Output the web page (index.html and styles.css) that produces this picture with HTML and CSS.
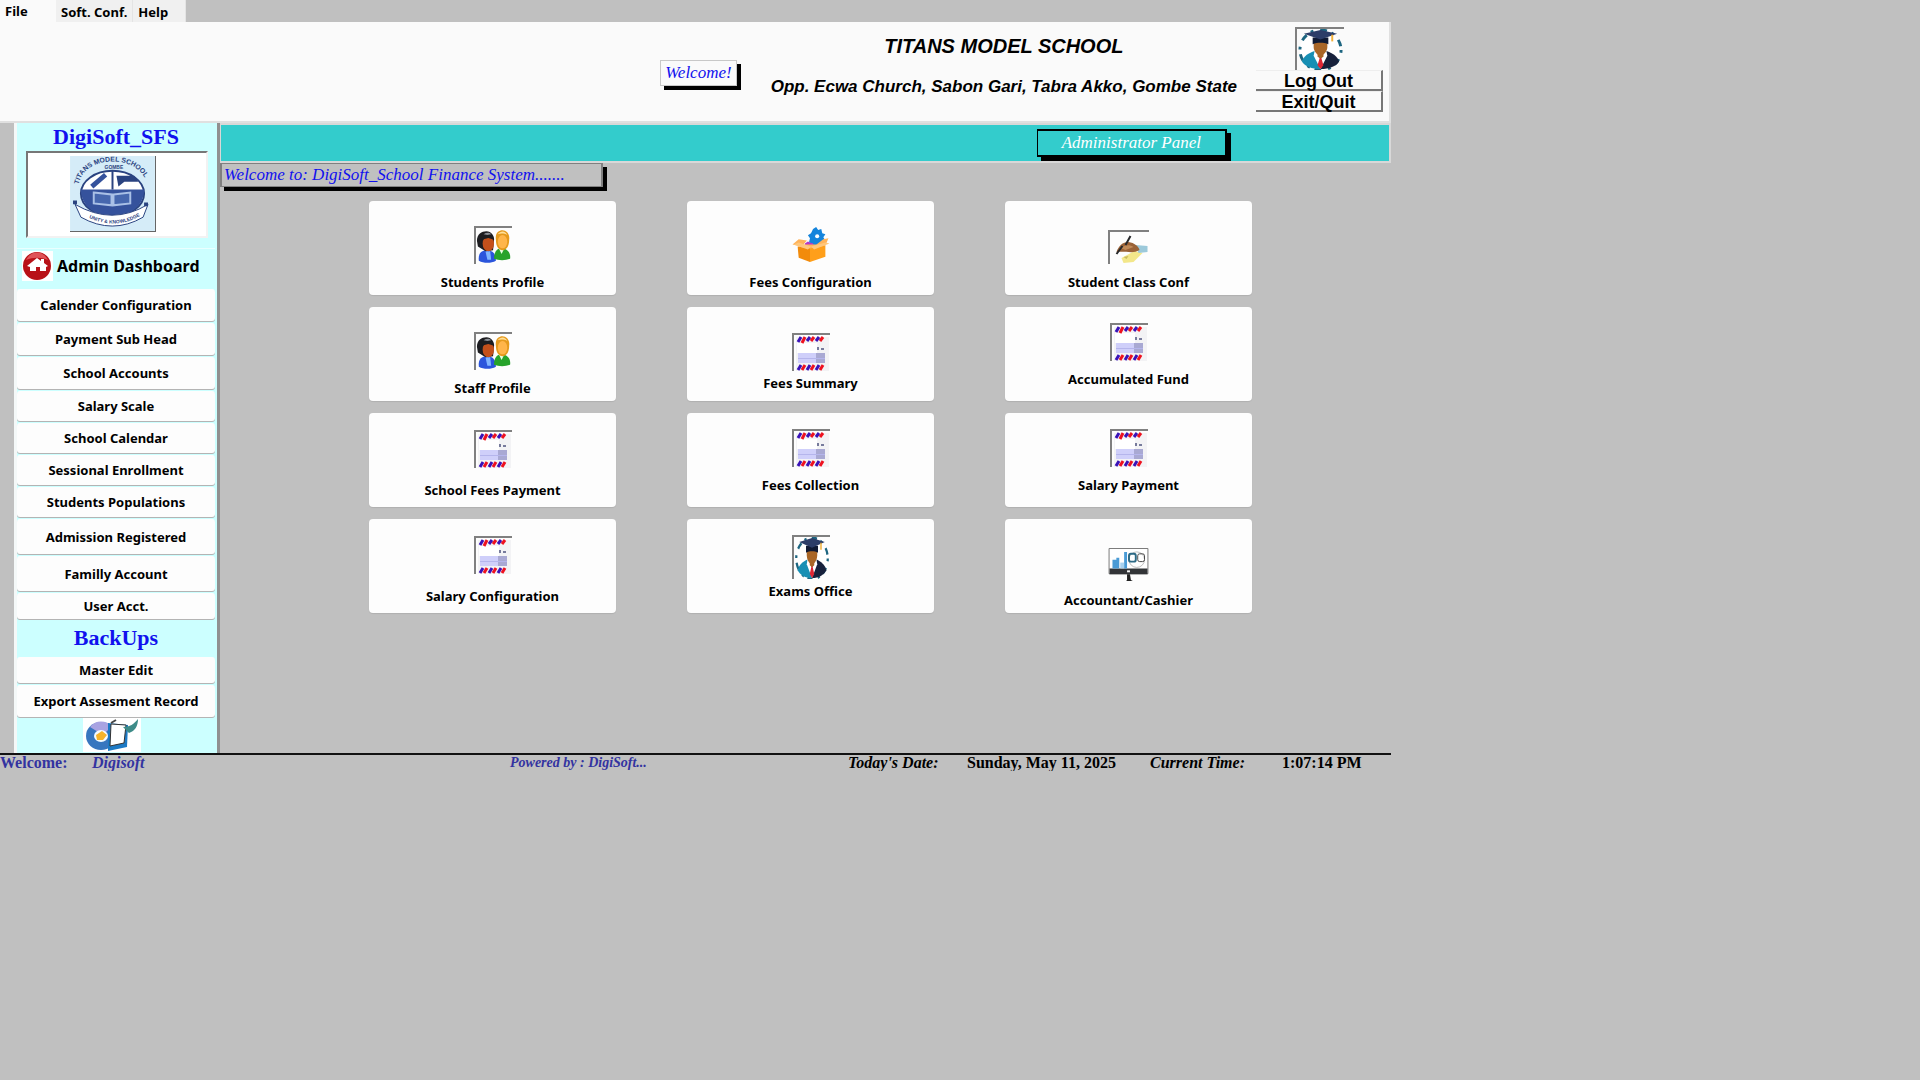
FILE: index.html
```html
<!DOCTYPE html>
<html lang="en">
<head>
<meta charset="utf-8">
<title>DigiSoft School Finance System</title>
<link rel="stylesheet" href="styles.css">
</head>
<body>
<svg class="sprite" aria-hidden="true">
  <symbol id="people" viewBox="0 0 38 37">
    <path fill="#2b55dc" d="M3 34c-1-8 3-11 9-11s9 4 9 11c-5 3-13 3-18 0z"/>
    <path fill="#7fb4ff" d="M10 24h5l1 9h-4z"/>
    <path fill="#27a32b" d="M19 32c0-7 3-11 8-11s10 4 9 11c-5 2-12 2-17 0z"/>
    <path fill="#e9ffe4" d="M24 21h6l-3 6z"/>
    <path fill="#1d1d20" d="M1 13C1 6 6 3 11 3s9 5 8 10l-1 10-8 1-8-5z"/>
    <ellipse cx="13" cy="16" rx="6" ry="8" fill="#c4501b"/>
    <path fill="#1d1d20" d="M6 12c3-6 11-6 13 0l-6-2z"/>
    <path fill="#8b8f96" d="M8 6c3-2 6-2 8 0l-4 1z"/>
    <path fill="#e59a1d" d="M21 12c-1-7 3-10 7-10s8 4 7 10c0 7-3 11-7 11s-7-4-7-11z"/>
    <ellipse cx="28" cy="14" rx="5" ry="7" fill="#ffb54a"/>
    <path fill="#ffe09a" d="M23 6c3-4 8-4 10 1-3-2-7-2-10-1z"/>
  </symbol>
  <symbol id="letter" viewBox="0 0 36 36">
    <path fill="#f3f3f5" d="M2 2h33v34H2z"/>
    <path fill="#fff" d="M3 8h20v10H3z"/>
    <path fill="#cfcffa" d="M4 18h18v10H4z"/>
    <path fill="#a9a9d3" d="M22 18h9v10h-9z"/>
    <path stroke="#b5b5ec" d="M4 23.500h27"/>
    <path stroke="#3a12b8" stroke-width="3" d="M4 7l3-5M13 6l3-4M22 6l3-4M4 35l3-5M13 35l3-5M22 35l3-5"/>
    <path stroke="#ee1220" stroke-width="3" d="M8 8l3-6M17 6l3-4M26 6l3-4M8 35l3-5M17 35l3-5M26 35l3-5"/>
    <path fill="#777b9c" d="M23 12h2v3h-2zM27 13h3v2h-3z"/>
  </symbol>
  <symbol id="graduate" viewBox="0 0 48 43" preserveAspectRatio="none">
    <circle cx="24" cy="22" r="21" fill="#fff" stroke="#1d6580" stroke-width="3" stroke-dasharray="3 7 7 5"/>
    <path fill="#178fb4" d="M5 34c2-6 7-9 13-11l6 5v14C15 42 8 39 5 34z"/>
    <path fill="#17213c" d="M43 34c-2-6-7-9-13-11l-6 5v14c9 0 16-3 19-8z"/>
    <path fill="#fff" d="M18 23h12l1 5-7 14-7-14z"/>
    <path fill="#dd2634" d="M22 27h4l-1 4 2 7-3 4-3-4 2-7z"/>
    <path fill="#a96627" d="M17 12h14v7c0 4-3 7-4 8v2l-3 2-3-2v-2c-1-1-4-4-4-8z"/>
    <path fill="#101a34" d="M16 9h16v7c-5-2-11-2-16 0z"/>
    <path fill="#2c3d68" d="M7 5l17-4 17 4-17 6z"/>
    <path fill="none" stroke="#f2b13a" stroke-width="2" d="M36 6v7"/>
  </symbol>
  <symbol id="box" viewBox="0 0 36 37">
    <path fill="#1484dc" d="M20 3l3-2 2 3 3-1 1 4 3 1-2 3 2 3-3 2-1 3-4-1-3 2-2-3-3-1 1-4-2-3 3-2z"/>
    <circle cx="24" cy="10" r="2" fill="#fff"/>
    <path fill="#b238c9" d="M12 17l3-2 2 1 3 1 1 3h-9z"/>
    <path fill="#ffb35a" d="M0 18l6-5 8 1-5 6zM22 19l8-6 5-1-3 7zM5 20l8-2h12l7 1-13 4z"/>
    <path fill="#f28b0c" d="M5 20l12 2v13L6 31z"/>
    <path fill="#ff9f1a" d="M17 22l15-3v11l-15 5z"/>
    <path fill="#ffc77c" d="M1 18l5-2 12 4-3 3zM18 20l14-4 4 1-15 6z"/>
  </symbol>
  <symbol id="writing" viewBox="0 0 38 32">
    <path fill="#f3e78a" d="M11 26l13-7 8 2-9 9-10 1z"/>
    <path fill="#c9b95b" d="M13 25l5-1-2 3z"/>
    <path fill="#9cc9da" d="M25 13l12 1v6l-9 1z"/>
    <path fill="#9a6237" d="M6 20c2-6 6-10 12-10 6 1 10 4 11 8-6 4-13 1-23 2z"/>
    <path fill="#c08a58" d="M10 16c4-3 9-4 13-1l-8 3z"/>
    <path stroke="#26282b" stroke-width="2" d="M20 4l-5 9M12 14l-6 8"/>
  </symbol>
  <symbol id="monitor" viewBox="0 0 41 35">
    <path fill="#fff" stroke="#777" d="M.5.500h40v26H.5z"/>
    <path fill="#323437" d="M1 21h39v6H1z"/>
    <path fill="#4a9bd6" d="M4 12h4v9H4zM8 10h3v11H8zM16 4h3v17h-3z"/>
    <path fill="#a9d2ef" d="M12 15h4v6h-4z"/>
    <circle cx="29" cy="12" r="8" fill="none" stroke="#bbb"/>
    <rect x="21" y="6" width="7" height="8" rx="2" fill="none" stroke="#2d6a85" stroke-width="2"/>
    <rect x="30" y="6" width="7" height="8" rx="2" fill="none" stroke="#444" stroke-width="1"/>
    <path fill="#fff" d="M19 23h3v2h-3z"/>
    <path fill="#222" d="M19 27h3l1 6 2 1h-7l1-1z"/>
  </symbol>
</svg>

<div class="app">
  <nav class="menu" aria-label="Menu">
    <button class="menu-item menu-item-open">File</button>
    <button class="menu-item">Soft. Conf.</button>
    <button class="menu-item">Help</button>
  </nav>

  <header class="header">
    <span class="welcome">Welcome!</span>
    <div class="school">
      <h1>TITANS MODEL SCHOOL</h1>
      <p>Opp. Ecwa Church, Sabon Gari, Tabra Akko, Gombe State</p>
    </div>
    <div class="session">
      <svg class="framed avatar"><use href="#graduate"/></svg>
      <button class="session-button">Log Out</button>
      <button class="session-button">Exit/Quit</button>
    </div>
  </header>

  <div class="body">
    <aside class="sidebar">
      <h2 class="side-title">DigiSoft_SFS</h2>
      <div class="logo">
        <svg class="crest" viewBox="0 0 86 76" role="img" aria-label="Titans Model School">
          <path fill="#d5ecf8" d="M0 0h86v76H0z"/>
          <defs>
            <path id="arc-top" d="M8 34C9-4 77-4 79 34"/>
            <path id="arc-low" d="M13 59Q43 78 74 59"/>
          </defs>
          <text class="crest-name"><textPath href="#arc-top" startOffset="5">TITANS MODEL SCHOOL</textPath></text>
          <text class="crest-town" x="35" y="13">GOMBE</text>
          <ellipse cx="43" cy="38" rx="32" ry="23" fill="#fff" stroke="#2a4380" stroke-width="2"/>
          <path fill="#35529c" d="M11 34h64c0 15-12 27-32 27S11 49 11 34z"/>
          <path stroke="#2a4380" stroke-width="2" d="M43 15v19"/>
          <path stroke="#35529c" stroke-width="5" d="M22 31l14-12"/>
          <path fill="#2a4380" d="M47 20h18l4 6H55l-6 5z"/>
          <path fill="#4667ae" stroke="#a9c0e6" stroke-width="2" d="M24 37l18 2v11l-18-2zM44 39l17-2v11l-17 2z"/>
          <path fill="#fff" stroke="#2a4380" d="M5 49q38 22 74 0l-5 13q-31 18-63 0z"/>
          <text class="crest-town"><textPath href="#arc-low" startOffset="7">UNITY &amp; KNOWLEDGE</textPath></text>
          <path fill="#2a4380" d="M3 45h4v4H3zM75 47h4v4h-4z"/>
        </svg>
      </div>
      <div class="dashboard">
        <svg class="home" viewBox="0 0 31 30">
          <path fill="#fff" d="M0 0h31v30H0z"/>
          <circle cx="15" cy="15" r="14" fill="#b81218"/>
          <path fill="#df5357" d="M4 9c5-10 17-10 22 0-7-3-15-3-22 0z"/>
          <path fill="#fff" d="M5 15l10-8 4 3V8h3v4l4 3-2 1v4h-6v-4h-4v4H8v-4z"/>
        </svg>
        <span>Admin Dashboard</span>
      </div>
      <div class="side-list">
        <button class="side-button">Calender Configuration</button>
        <button class="side-button">Payment Sub Head</button>
        <button class="side-button">School Accounts</button>
        <button class="side-button side-short">Salary Scale</button>
        <button class="side-button side-short">School Calendar</button>
        <button class="side-button side-short">Sessional Enrollment</button>
        <button class="side-button side-short">Students Populations</button>
        <button class="side-button side-tall">Admission Registered</button>
        <button class="side-button side-tall">Familly Account</button>
        <button class="side-button side-slim">User Acct.</button>
      </div>
      <h2 class="side-title side-title-roomy">BackUps</h2>
      <div class="side-list">
        <button class="side-button side-slim">Master Edit</button>
        <button class="side-button">Export Assesment Record</button>
      </div>
      <svg class="disc" viewBox="0 0 58 34">
        <path fill="#fff" d="M0 0h58v34H0z"/>
        <ellipse cx="18" cy="18" rx="15" ry="14" fill="#3876bf"/>
        <path fill="#a9a3e2" d="M7 9c6-8 17-6 22-1l-9 9z"/>
        <ellipse cx="18" cy="18" rx="7" ry="6" fill="#f4fbff"/>
        <path fill="#f4b32a" d="M13 17l6-4 5 4-4 5h-6z"/>
        <path fill="#1c79c4" d="M25 5l20 2-1 22-19 4z"/>
        <path fill="#fff" stroke="#333" d="M28 6l15 1-2 18-14 3z"/>
        <path fill="#3d8b88" d="M40 9c7 0 11-3 15-8 0 7-3 12-9 14z"/>
        <path stroke="#444" stroke-width="2" d="M28 5l5-3"/>
      </svg>
    </aside>

    <main class="main">
      <div class="banner"><span class="panel-name">Administrator Panel</span></div>
      <p class="greeting">Welcome to: DigiSoft_School Finance System.......</p>
      <div class="cards">
        <button class="card"><svg class="icon framed"><use href="#people"/></svg>Students Profile</button>
        <button class="card"><svg class="icon"><use href="#box"/></svg>Fees Configuration</button>
        <button class="card"><svg class="icon icon-wide framed"><use href="#writing"/></svg>Student Class Conf</button>
        <button class="card"><svg class="icon framed"><use href="#people"/></svg>Staff Profile</button>
        <button class="card card-snug"><svg class="icon framed"><use href="#letter"/></svg>Fees Summary</button>
        <button class="card card-raised"><svg class="icon framed"><use href="#letter"/></svg>Accumulated Fund</button>
        <button class="card card-roomy"><svg class="icon framed"><use href="#letter"/></svg>School Fees Payment</button>
        <button class="card card-raised"><svg class="icon framed"><use href="#letter"/></svg>Fees Collection</button>
        <button class="card card-raised"><svg class="icon framed"><use href="#letter"/></svg>Salary Payment</button>
        <button class="card card-roomy"><svg class="icon framed"><use href="#letter"/></svg>Salary Configuration</button>
        <button class="card card-snug card-raised"><svg class="icon icon-tall framed"><use href="#graduate"/></svg>Exams Office</button>
        <button class="card"><svg class="icon icon-wide"><use href="#monitor"/></svg>Accountant/Cashier</button>
      </div>
    </main>
  </div>

  <footer class="status">
    <span class="user-label">Welcome:</span>
    <span class="user">Digisoft</span>
    <span class="powered">Powered by : DigiSoft...</span>
    <em>Today's Date:</em>
    <span>Sunday, May 11, 2025</span>
    <em>Current Time:</em>
    <span>1:07:14 PM</span>
  </footer>
</div>
</body>
</html>
```
FILE: styles.css
```css
* { box-sizing: border-box; }

body {
  margin: 0;
  background: #c0c0c0;
  color: #000;
  font: bold 13px/18px "Noto Sans", "Open Sans", sans-serif;
}

h1, h2, p { margin: 0; }

button {
  margin: 0;
  padding: 0;
  border: 0;
  background: #fdfdfd;
  color: inherit;
  font: inherit;
}

.sprite { position: absolute; width: 0; height: 0; }

.app { width: 100%; max-width: 1391px; }

/* Menu */
.menu { display: flex; height: 22px; }
.menu-item {
  padding: 2px 5px 0;
  border-right: 1px solid #e4e4e4;
  background: #f0f0f0;
}
.menu-item:last-child { padding-right: 17px; }
.menu-item-open { width: 56px; padding-top: 0; border: 0; background: #fafafa; text-align: left; }

/* Header */
.header {
  display: flex;
  justify-content: flex-end;
  align-items: flex-start;
  min-height: 101px;
  padding: 5px 6px 0 0;
  border-right: 2px solid #e0e0e0;
  border-bottom: 2px solid #e0e0e0;
  background: #fafafa;
}
.welcome {
  margin: 33px 34px 0 0;
  padding: 0 4px;
  border: 1px solid #c8c8c8;
  box-shadow: 4px 4px 0 #000;
  color: #1111ee;
  font: italic 17px/24px "Liberation Serif", serif;
}
.school { margin-right: 19px; text-align: center; font-family: "Liberation Sans", sans-serif; font-style: italic; }
.school h1 { padding-top: 7px; font-size: 20px; line-height: 24px; }
.school p { padding-top: 17px; font-size: 17px; line-height: 24px; }
.session { display: flex; flex-direction: column; align-items: center; width: 127px; }
.avatar { width: 49px; height: 43px; }
.session-button {
  width: 100%;
  height: 21px;
  border-right: 2px solid #777;
  border-bottom: 2px solid #777;
  border-top: 1px solid #eee;
  padding-top: 1px;
  background: #fafafa;
  font: bold 18px/18px "Liberation Sans", sans-serif;
}
.framed { border-top: 2px solid #808080; border-left: 2px solid #808080; }

/* Sidebar */
.body { display: flex; align-items: stretch; }
.sidebar {
  width: 206px;
  margin-left: 14px;
  padding: 0 2px 1px 0;
  border-left: 3px solid #f4f8f8;
  border-right: 3px solid #909090;
  background: #ccffff;
}
.side-title { color: #1111ee; font: bold 22px/28px "Liberation Serif", serif; text-align: center; }
.side-title-roomy { line-height: 38px; }
.logo {
  display: flex;
  justify-content: center;
  height: 87px;
  margin: 0 7px 0 9px;
  padding-top: 3px;
  border: 2px solid #f2f2f2;
  border-top-color: #777;
  border-left-color: #777;
  background: #fff;
}
.crest { width: 86px; height: 76px; margin-right: 9px; border-right: 1px solid #666; border-bottom: 1px solid #666; }
.crest-name { fill: #2a4380; font: bold 7px "Liberation Sans", sans-serif; }
.crest-town { fill: #2a4380; font: bold 5px "Liberation Sans", sans-serif; }
.dashboard {
  display: flex;
  align-items: center;
  gap: 4px;
  height: 41px;
  margin-top: 10px;
  padding: 0 0 6px 5px;
  border-top: 1px solid #eaffff;
  font-size: 16px;
  white-space: nowrap;
}
.home { width: 31px; height: 30px; }
.side-list { display: flex; flex-direction: column; gap: 2px; }
.side-button { height: 32px; border-radius: 3px; box-shadow: 0 1px 0 #b4b4b4; white-space: nowrap; }
.side-short { height: 30px; }
.side-slim { height: 26px; }
.side-tall { height: 35px; }
.disc { display: block; width: 58px; height: 34px; margin: 1px auto 0 66px; }

/* Main */
.main { flex: 1; min-width: 0; }
.banner {
  display: flex;
  justify-content: flex-end;
  height: 40px;
  padding: 4px 162px 0 0;
  border: 2px solid #d8d8d8;
  border-left-width: 1px;
  background: #33cccc;
}
.panel-name {
  height: 28px;
  padding: 0 24px;
  border: 2px solid #000;
  border-left-width: 1px;
  box-shadow: 4px 4px 0 #000;
  color: #fff;
  font: italic 17px/24px "Liberation Serif", serif;
}
.greeting {
  width: fit-content;
  padding: 0 36px 0 2px;
  border: 1px solid #808080;
  border-width: 1px 2px;
  box-shadow: 4px 4px 0 #000;
  color: #1111ee;
  font: italic 17px/22px "Liberation Serif", serif;
}
.cards {
  display: grid;
  grid-template-columns: repeat(3, 1fr);
  grid-auto-rows: 94px;
  gap: 12px 71px;
  padding: 14px 139px 0 149px;
}
.card {
  display: flex;
  flex-direction: column;
  justify-content: flex-end;
  align-items: center;
  gap: 9px;
  padding-bottom: 4px;
  border-radius: 4px;
  box-shadow: 0 1px 1px #b0b0b0;
}
.card-snug { gap: 3px; padding-bottom: 9px; }
.card-raised { padding-bottom: 13px; }
.card-roomy { gap: 13px; padding-bottom: 8px; }
.icon { width: 38px; height: 38px; }
.icon-wide { width: 41px; height: 34px; }
.icon-tall { height: 44px; }

/* Status */
.status {
  display: grid;
  grid-template-columns: 92px 418px 338px 119px 183px 132px 1fr;
  border-top: 2px solid #111;
  font: bold 16px/16px "Liberation Serif", serif;
  white-space: nowrap;
}
.user-label, .user, .powered { color: #3333a0; }
.user, .powered { font-style: italic; }
.powered { font-size: 14px; }
```
